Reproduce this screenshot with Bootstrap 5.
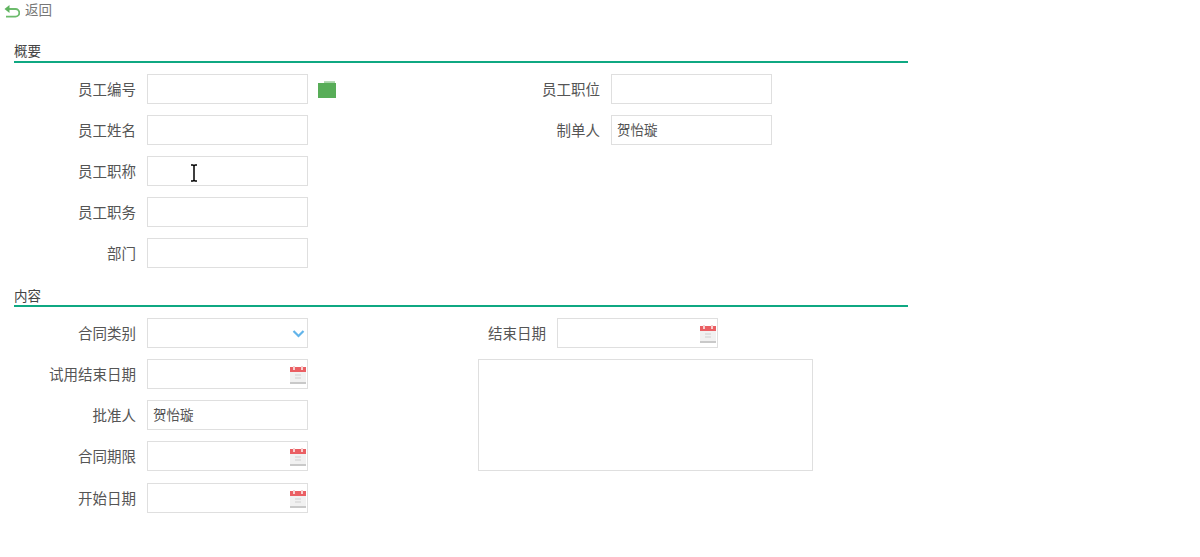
<!DOCTYPE html>
<html lang="zh-CN">
<head>
<meta charset="utf-8">
<title>合同</title>
<link href="https://cdn.jsdelivr.net/npm/bootstrap@5.3.0/dist/css/bootstrap.min.css" rel="stylesheet">
<style>
html,body{height:557px;overflow:hidden}
body{background:#fff;color:#555;font-family:"Liberation Sans","Noto Sans CJK SC",sans-serif;font-size:14.5px;line-height:20px}
.backbar{height:22px;padding-left:4px;font-size:13.5px;color:#777;gap:5px}
.page-body{width:908px;padding-left:14px}
.sec-head{color:#444;font-size:13.5px;border-bottom:2px solid #0fa882}
.sec-a{margin-top:21px;height:20px;line-height:18px}
.sec-b{margin-top:8px;height:20px;line-height:20px}
.rows-a{padding-top:11px}
.rows-b{padding-top:11px}
.frow{height:30px;margin-bottom:11px}
.frow.wide{margin-bottom:12px}
.flabel{width:133px;text-align:right;padding-right:11px;padding-top:2px;flex:none;color:#555}
.field{width:161px;height:30px;border:1px solid #dfdfdf;background:#fff;padding:0 5px;font-size:13.5px;line-height:30px;color:#555;flex:none}
.col-l{width:464px;flex:none}
.lab-b{width:79px}
.memo{width:335px;height:112px;border:1px solid #dfdfdf}
.fold{margin-left:10px}
.field-box{position:relative}
.ico-r{position:absolute;right:1px;top:6px}
.ibeam{position:absolute;left:42px;top:7px}
</style>
</head>
<body>
<div class="backbar d-flex align-items-center">
<svg width="16" height="15" viewBox="0 0 16 15"><path d="M5 5H11.5a3.8 3.8 0 0 1 0 7.6H2" fill="none" stroke="#6cbb6c" stroke-width="1.8"/><path d="M0.5 5L5.5 1V9Z" fill="#5fb35f"/></svg>
<span>返回</span>
</div>
<div class="page-body">
<div class="sec-head sec-a">概要</div>
<div class="d-flex rows-a">
<div class="col-l">
<div class="frow d-flex align-items-center"><div class="flabel">员工编号</div><div class="field"></div>
<svg class="fold" width="18" height="17" viewBox="0 0 18 17"><path d="M6 0.5H17V1.6H6Z" fill="#6fb96f"/><rect y="2" width="18" height="15" fill="#58ad58"/></svg></div>
<div class="frow d-flex align-items-center"><div class="flabel">员工姓名</div><div class="field"></div></div>
<div class="frow d-flex align-items-center"><div class="flabel">员工职称</div><div class="field field-box">
<svg class="ibeam" width="8" height="18" viewBox="0 0 8 18"><path d="M1 1H3L4 2L5 1H7M4 2V16M1 17H3L4 16L5 17H7" fill="none" stroke="#000" stroke-width="1.5"/></svg></div></div>
<div class="frow d-flex align-items-center"><div class="flabel">员工职务</div><div class="field"></div></div>
<div class="frow d-flex align-items-center"><div class="flabel">部门</div><div class="field"></div></div>
</div>
<div>
<div class="frow d-flex align-items-center"><div class="flabel">员工职位</div><div class="field"></div></div>
<div class="frow d-flex align-items-center"><div class="flabel">制单人</div><div class="field">贺怡璇</div></div>
</div>
</div>
<div class="sec-head sec-b">内容</div>
<div class="d-flex rows-b">
<div class="col-l">
<div class="frow d-flex align-items-center"><div class="flabel">合同类别</div><div class="field field-box">
<svg class="ico-r" width="14" height="16" viewBox="0 0 14 16"><path d="M1.5 6L6.5 11L11.5 6" fill="none" stroke="#62b4ea" stroke-width="2.2"/></svg></div></div>
<div class="frow d-flex align-items-center"><div class="flabel">试用结束日期</div><div class="field field-box">
<svg class="ico-r" width="16" height="18" viewBox="0 0 16 18"><rect y="1" width="16" height="17" fill="#f1f1f1"/><rect y="1" width="16" height="5" fill="#ea5f63"/><rect x="3" width="2" height="4" fill="#f6d0d0"/><rect x="11" width="2" height="4" fill="#f6d0d0"/><path d="M5 9H11M5 12H11" stroke="#cfcfcf"/><rect y="16" width="16" height="2" fill="#c9c9c9"/></svg></div></div>
<div class="frow d-flex align-items-center"><div class="flabel">批准人</div><div class="field">贺怡璇</div></div>
<div class="frow wide d-flex align-items-center"><div class="flabel">合同期限</div><div class="field field-box">
<svg class="ico-r" width="16" height="18" viewBox="0 0 16 18"><rect y="1" width="16" height="17" fill="#f1f1f1"/><rect y="1" width="16" height="5" fill="#ea5f63"/><rect x="3" width="2" height="4" fill="#f6d0d0"/><rect x="11" width="2" height="4" fill="#f6d0d0"/><path d="M5 9H11M5 12H11" stroke="#cfcfcf"/><rect y="16" width="16" height="2" fill="#c9c9c9"/></svg></div></div>
<div class="frow d-flex align-items-center"><div class="flabel">开始日期</div><div class="field field-box">
<svg class="ico-r" width="16" height="18" viewBox="0 0 16 18"><rect y="1" width="16" height="17" fill="#f1f1f1"/><rect y="1" width="16" height="5" fill="#ea5f63"/><rect x="3" width="2" height="4" fill="#f6d0d0"/><rect x="11" width="2" height="4" fill="#f6d0d0"/><path d="M5 9H11M5 12H11" stroke="#cfcfcf"/><rect y="16" width="16" height="2" fill="#c9c9c9"/></svg></div></div>
</div>
<div>
<div class="frow d-flex align-items-center"><div class="flabel lab-b">结束日期</div><div class="field field-box">
<svg class="ico-r" width="16" height="18" viewBox="0 0 16 18"><rect y="1" width="16" height="17" fill="#f1f1f1"/><rect y="1" width="16" height="5" fill="#ea5f63"/><rect x="3" width="2" height="4" fill="#f6d0d0"/><rect x="11" width="2" height="4" fill="#f6d0d0"/><path d="M5 9H11M5 12H11" stroke="#cfcfcf"/><rect y="16" width="16" height="2" fill="#c9c9c9"/></svg></div></div>
<div class="memo"></div>
</div>
</div>
</div>
<script src="https://cdn.jsdelivr.net/npm/bootstrap@5.3.0/dist/js/bootstrap.bundle.min.js"></script>
</body>
</html>
